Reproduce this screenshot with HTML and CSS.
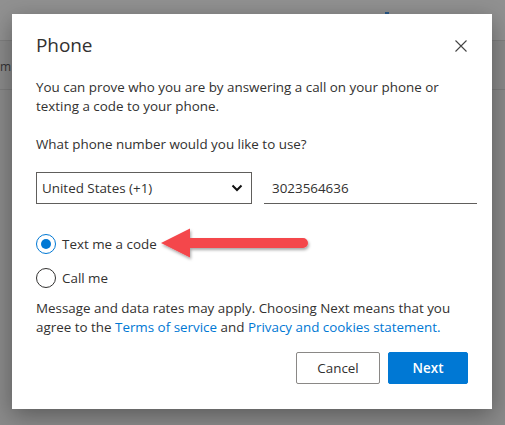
FILE: index.html
```html
<!DOCTYPE html>
<html>
<head>
<meta charset="utf-8">
<link rel="stylesheet" href="styles.css">
</head>
<body>
<div class="page">
  <div class="page-header"><span class="hdr-mark"></span></div>
  <div class="page-row"><span class="row-text">m</span></div>
</div>
<div class="dialog">
  <div class="dlg-head">
    <h1 class="dlg-title">Phone</h1>
    <svg class="close" width="12" height="12" viewBox="0 0 12 12"><path d="M0.5 0.5L11.5 11.5M11.5 0.5L0.5 11.5" stroke="#444" stroke-width="1.1" fill="none"/></svg>
  </div>
  <p class="txt intro">You can prove who you are by answering a call on your phone or texting a code to your phone.</p>
  <p class="txt question">What phone number would you like to use?</p>
  <div class="fields">
    <div class="select"><span>United States (+1)</span>
      <svg width="12" height="8" viewBox="0 0 12 8"><path d="M1.5 1.5L6 6L10.5 1.5" stroke="#111" stroke-width="2" fill="none"/></svg>
    </div>
    <div class="phone"><span>3023564636</span></div>
  </div>
  <div class="radios">
    <div class="radio-row">
      <span class="radio checked"><span class="dot"></span></span>
      <span class="radio-label">Text me a code</span>
      <svg class="arrow" width="160" height="40" viewBox="0 0 160 40">
        <defs><filter id="sh" x="-10%" y="-30%" width="130%" height="180%"><feDropShadow dx="1" dy="2" stdDeviation="1.8" flood-color="#000" flood-opacity="0.35"/></filter></defs>
        <g filter="url(#sh)" fill="#f4464b">
          <path d="M4 18L33 3.5V13H146A5 5 0 0 1 146 23H33V32.5Z"/>
        </g>
      </svg>
    </div>
    <div class="radio-row">
      <span class="radio"></span>
      <span class="radio-label">Call me</span>
    </div>
  </div>
  <p class="txt legal"><span>Message and data rates may apply. Choosing Next means that you</span><br><span>agree to the</span> <a href="#">Terms of service</a> <span>and</span> <a href="#">Privacy and cookies statement.</a></p>
  <div class="actions">
    <button class="btn cancel">Cancel</button>
    <button class="btn next">Next</button>
  </div>
</div>
</body>
</html>
```

FILE: styles.css
```css
* { box-sizing: border-box; }
html, body { margin: 0; padding: 0; }
body {
  width: 505px;
  height: 425px;
  overflow: hidden;
  background: #8a8a8a;
  font-family: "Open Sans", "Noto Sans", sans-serif;
  position: relative;
}
.page { height: 425px; }
.page-header {
  height: 41px;
  background: #919191;
  border-bottom: 1px solid #7f7f7f;
  position: relative;
}
.hdr-mark {
  position: absolute;
  left: 385px; top: 12px;
  width: 4px; height: 3px;
  background: #2a5a8a;
}
.page-row {
  height: 49px;
  border-bottom: 1px solid #7d7d7d;
  display: flex;
  align-items: center;
}
.row-text { font-size: 12px; color: #333; margin-left: 0; padding-top: 2px; }

.dialog {
  position: absolute;
  left: 12px;
  top: 14px;
  width: 480px;
  height: 395px;
  background: #fff;
  box-shadow: 0 6px 22px rgba(0,0,0,0.35);
  padding: 17px 24px 0 24px;
  color: #323130;
}
.dlg-head {
  display: flex;
  justify-content: space-between;
  align-items: center;
  height: 28px;
}
.dlg-title {
  margin: 0;
  font-size: 19px;
  font-weight: 400;
  color: #323130;
  letter-spacing: -0.1px;
}
.close { margin-right: 1px; margin-top: 2px; }
.txt {
  font-size: 13.4px;
  line-height: 19px;
  margin: 0;
  color: #323130;
}
.intro { margin-top: 19px; }
.question { margin-top: 19px; }
.fields {
  display: flex;
  gap: 12px;
  margin-top: 18px;
  margin-right: -9px;
}
.select {
  width: 216px;
  height: 32px;
  border: 1px solid #605e5c;
  display: flex;
  align-items: center;
  justify-content: space-between;
  padding: 0 8px 0 5px;
  font-size: 13.4px;
  color: #323130;
}
.phone {
  flex: 1;
  height: 32px;
  border-bottom: 1px solid #605e5c;
  display: flex;
  align-items: center;
  padding-left: 8px;
  font-size: 13.4px;
  color: #323130;
}
.radios { margin-top: 30px; display: flex; flex-direction: column; gap: 14px; }
.radio-row { display: flex; align-items: center; height: 20px; position: relative; }
.radio {
  width: 20px; height: 20px;
  border-radius: 50%;
  border: 1px solid #323130;
  display: flex; align-items: center; justify-content: center;
  margin-right: 6px;
}
.radio.checked { border-color: #0078d4; }
.dot { width: 10px; height: 10px; border-radius: 50%; background: #0078d4; }
.radio-label { font-size: 13.4px; color: #323130; }
.arrow { position: absolute; left: 121px; top: -9px; }
.legal { margin-top: 11px; }
.legal a { color: #0078d4; text-decoration: none; }
.actions {
  display: flex;
  justify-content: flex-end;
  gap: 8px;
  margin-top: 15px;
}
.btn {
  height: 32px;
  font-family: inherit;
  font-size: 13.4px;
  border-radius: 2px;
  padding: 0;
}
.cancel { width: 84px; background: #fff; border: 1px solid #8a8886; color: #323130; }
.next { width: 80px; background: #0078d4; border: 1px solid #0078d4; color: #fff; font-weight: 600; }
```
